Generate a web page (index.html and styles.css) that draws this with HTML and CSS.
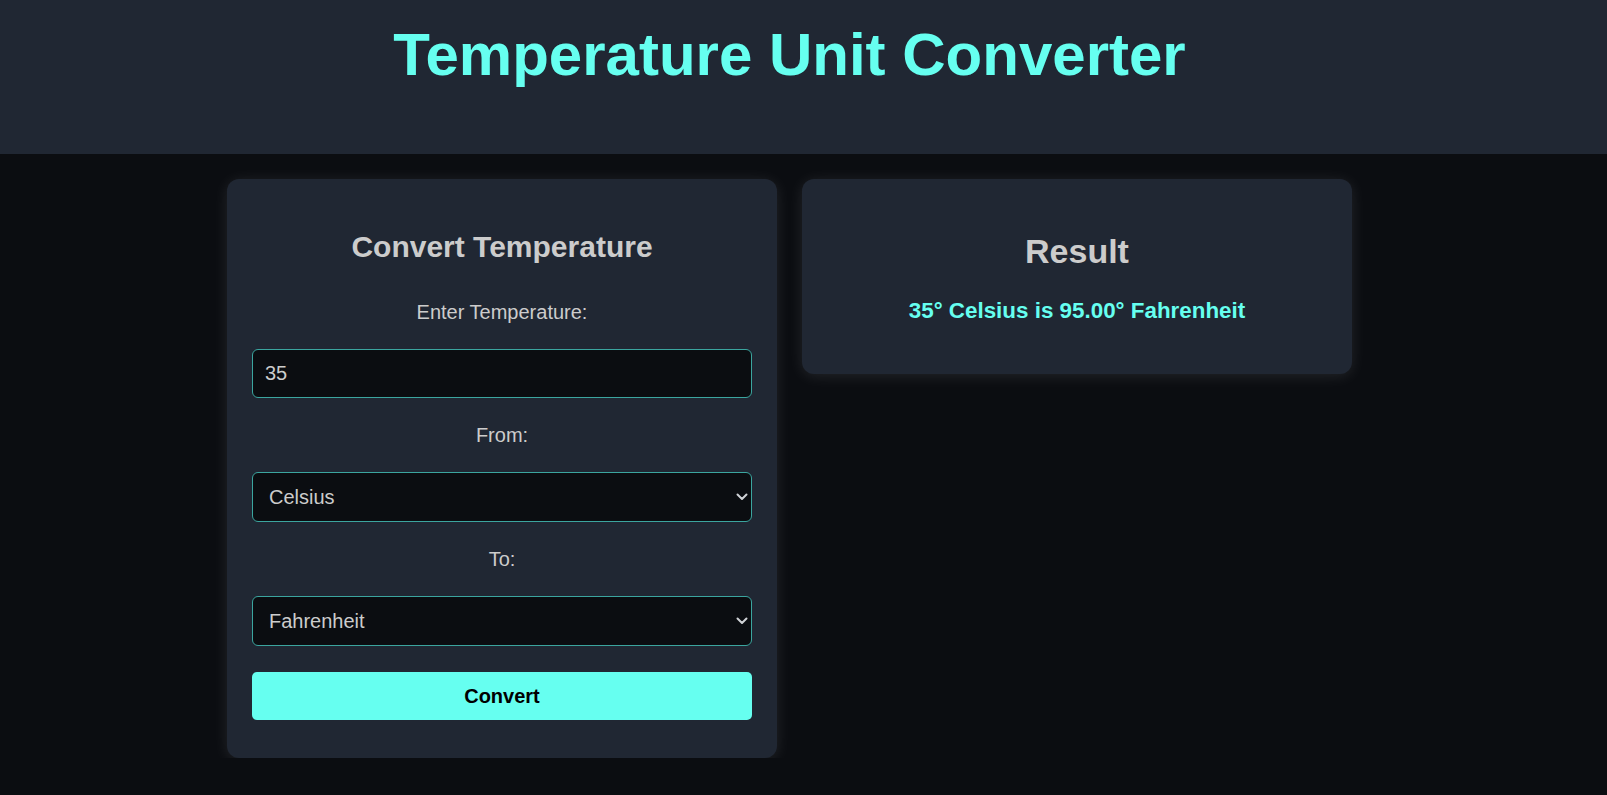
FILE: index.html
```html
<!DOCTYPE html>
<html lang="en">
<head>
<meta charset="utf-8">
<title>Temperature Unit Converter</title>
<link rel="stylesheet" href="styles.css">
</head>
<body>
<header class="site-header">
  <h1 class="title">Temperature Unit Converter</h1>
</header>
<main class="layout">
  <section class="card converter">
    <h2 class="card-title">Convert Temperature</h2>
    <label class="field-label first" for="temp">Enter Temperature:</label>
    <input class="field input" id="temp" type="text" value="35">
    <label class="field-label" for="from">From:</label>
    <div class="select-wrap">
      <select class="field select" id="from">
        <option selected>Celsius</option>
        <option>Fahrenheit</option>
        <option>Kelvin</option>
      </select>
      <svg class="chevron" width="12" height="8" viewBox="0 0 12 8" aria-hidden="true"><polyline points="1.5,1.5 6,6 10.5,1.5" fill="none" stroke="#cfd2d6" stroke-width="2" stroke-linecap="round" stroke-linejoin="round"/></svg>
    </div>
    <label class="field-label" for="to">To:</label>
    <div class="select-wrap">
      <select class="field select" id="to">
        <option>Celsius</option>
        <option selected>Fahrenheit</option>
        <option>Kelvin</option>
      </select>
      <svg class="chevron" width="12" height="8" viewBox="0 0 12 8" aria-hidden="true"><polyline points="1.5,1.5 6,6 10.5,1.5" fill="none" stroke="#cfd2d6" stroke-width="2" stroke-linecap="round" stroke-linejoin="round"/></svg>
    </div>
    <button class="btn" type="button">Convert</button>
  </section>
  <section class="card result">
    <h2 class="result-title">Result</h2>
    <p class="result-text">35° Celsius is 95.00° Fahrenheit</p>
  </section>
</main>
</body>
</html>
```
FILE: styles.css
```css
body {
  margin: 0;
  background: #0b0d11;
  font-family: "Liberation Sans", Arial, sans-serif;
  color: #cccccc;
}

.site-header {
  background: #202733;
  padding: 20px 28px 65px 0;
  text-align: center;
}

.title {
  margin: 0;
  font-size: 60px;
  line-height: 69px;
  font-weight: 700;
  color: #66fff0;
}

.layout {
  display: flex;
  justify-content: center;
  align-items: flex-start;
  gap: 25px;
  padding: 25px 28px 0 0;
}

.card {
  width: 550px;
  box-sizing: border-box;
  padding: 25px;
  background: #202733;
  border-radius: 12px;
  box-shadow: 0 2px 15px rgba(255, 255, 255, 0.1);
  text-align: center;
}

.converter {
  display: flex;
  flex-direction: column;
}

.card-title {
  margin: 25px 0;
  font-size: 30px;
  line-height: 35px;
  font-weight: 700;
  color: #cccccc;
}

.field-label {
  display: block;
  margin-top: 26px;
  font-size: 20px;
  line-height: 23px;
  color: #cccccc;
}

.field-label.first {
  margin-top: 12px;
}

.field {
  display: block;
  width: 100%;
  box-sizing: border-box;
  margin: 0;
  background: #0b0d11;
  color: #cccccc;
  border: 1px solid #3ba59f;
  border-radius: 6px;
  font-family: "Liberation Sans", Arial, sans-serif;
  font-size: 20px;
  outline: none;
}

.input {
  margin-top: 25px;
  height: 49px;
  padding: 0 12px;
}

.select-wrap {
  position: relative;
  margin-top: 25px;
}

.select {
  height: 50px;
  padding: 0 16px;
  appearance: none;
  -webkit-appearance: none;
}

.chevron {
  position: absolute;
  right: 4px;
  top: 21px;
  pointer-events: none;
}

.btn {
  margin: 26px 0 13px;
  height: 48px;
  width: 100%;
  border: none;
  border-radius: 5px;
  background: #66fff0;
  color: #000000;
  font-family: "Liberation Sans", Arial, sans-serif;
  font-size: 20px;
  font-weight: 700;
}

.result-title {
  margin: 28px 0 27px;
  font-size: 34px;
  line-height: 39px;
  font-weight: 700;
  color: #cccccc;
}

.result-text {
  margin: 0 0 25px;
  font-size: 22.4px;
  line-height: 26px;
  font-weight: 700;
  color: #66fff0;
}
```
